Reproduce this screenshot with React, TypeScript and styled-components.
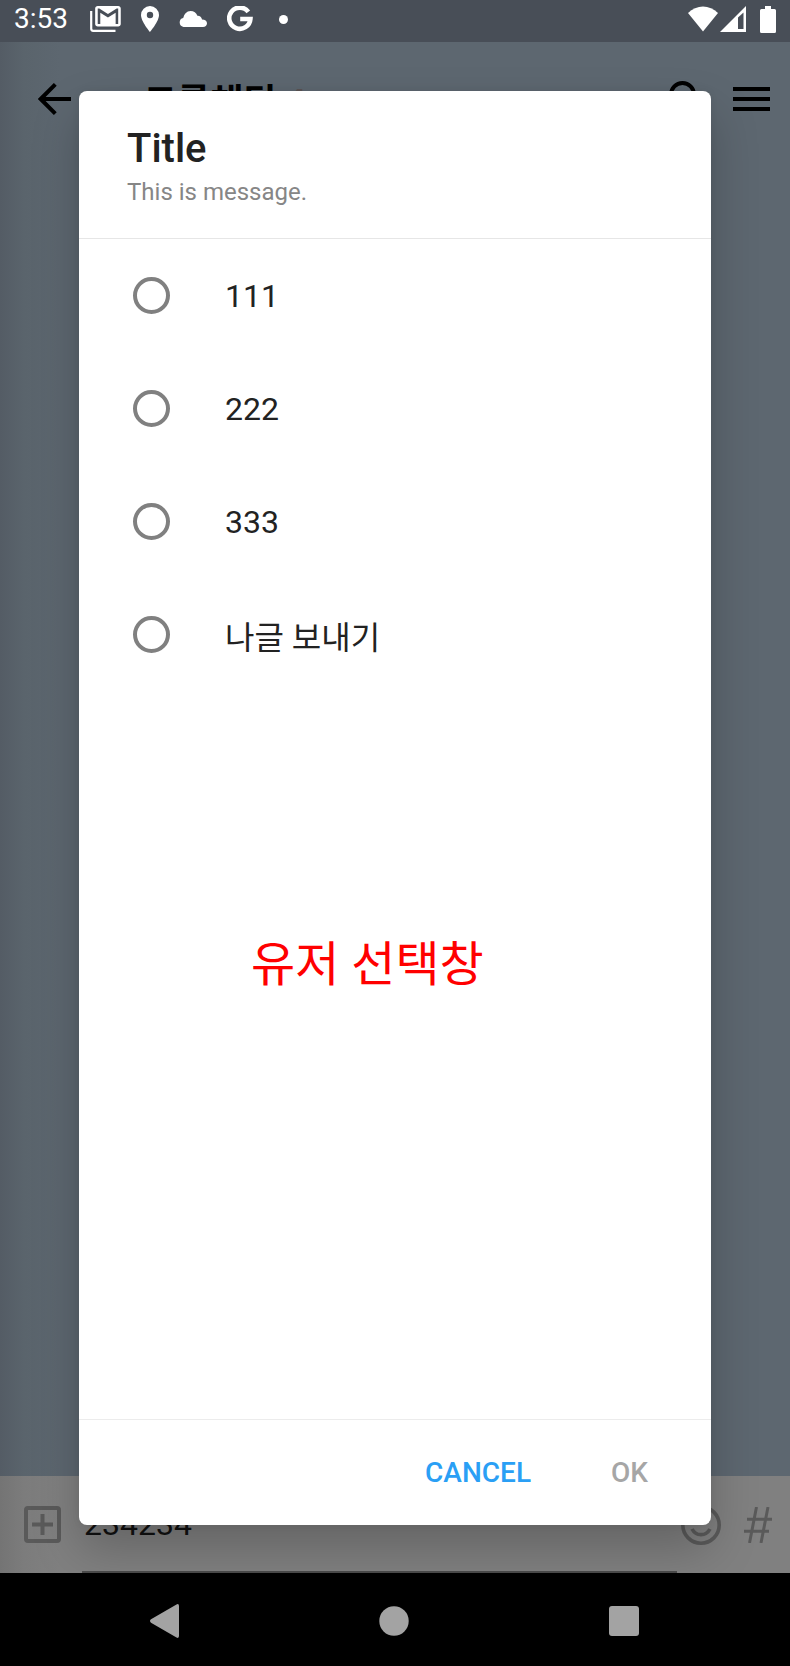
import React, { useState } from "react";
import styled, { createGlobalStyle } from "styled-components";

const GlobalStyle = createGlobalStyle`
  *, *::before, *::after { box-sizing: border-box; }
  body { margin: 0; background: #000; font-family: Roboto, "Noto Sans CJK KR", sans-serif; }
  button, input { font-family: inherit; }
  button { padding: 0; border: 0; background: none; cursor: pointer; }
  svg { display: block; flex: none; }
`;

const Screen = styled.div`
  position: relative;
  display: flex;
  flex-direction: column;
  min-height: 100vh;
`;

const StatusBar = styled.div`
  display: flex;
  align-items: center;
  justify-content: space-between;
  height: 42px;
  padding: 0 14px 4px 14px;
  background: #484e57;
  color: #fff;
`;

const StatusGroup = styled.div<{ $gap: number }>`
  display: flex;
  align-items: center;
  gap: ${(p) => p.$gap}px;
`;

const Clock = styled.time`
  margin-right: 2px;
  font-size: 28px;
  line-height: 36px;
`;

const Chat = styled.main`
  flex: 1;
  background: linear-gradient(90deg, #545c65 0, #5a646c 24px, #5d6770 60px);
`;

const ChatHeader = styled.header`
  display: flex;
  align-items: center;
  height: 114px;
  padding: 0 20px 0 38px;
`;

const IconButton = styled.button`
  display: flex;
  color: inherit;
`;

const ChatTitle = styled.h1`
  flex: 1;
  margin: 0 0 0 73px;
  padding-top: 8px;
  font-size: 36px;
  font-weight: 700;
  line-height: 42px;
  color: #000;
`;

const MemberCount = styled.span`
  color: #5b5354;
`;

const HeaderActions = styled.div`
  display: flex;
  align-items: center;
  gap: 24px;
`;

const Composer = styled.form`
  display: flex;
  align-items: stretch;
  height: 97px;
  padding: 0 18px 0 24px;
  background: linear-gradient(90deg, #747474 0, #7c7c7c 24px, #808080 60px);
  color: #5a5a5a;

  button { align-items: center; }
`;

const MessageInput = styled.input`
  flex: 1;
  min-width: 0;
  margin: 0 4px 0 21px;
  padding: 0 2px;
  border: 0;
  border-bottom: 2px solid #4c4c4c;
  outline: 0;
  background: transparent;
  color: #111;
  font-size: 32px;
`;

const ComposerActions = styled.div`
  display: flex;
  gap: 23px;
`;

const NavBar = styled.nav`
  display: flex;
  align-items: center;
  justify-content: space-around;
  height: 93px;
  padding: 3px 51px 0 50px;
  background: #000;
  color: #a3a3a3;
`;

const Overlay = styled.div`
  position: absolute;
  inset: 0;
  display: flex;
  padding: 91px 10% 141px;
`;

const Dialog = styled.section`
  flex: 1;
  display: flex;
  flex-direction: column;
  border-radius: 8px;
  background: #fff;
  box-shadow: 0 24px 48px rgba(0, 0, 0, 0.22), 0 0 8px rgba(0, 0, 0, 0.06);
`;

const DialogHeader = styled.header`
  height: 148px;
  padding: 34px 49px 0 48px;
  border-bottom: 1px solid #e6e6e6;
`;

const DialogTitle = styled.h2`
  margin: 0;
  font-size: 40px;
  font-weight: 500;
  line-height: 48px;
  color: #222;
`;

const DialogMessage = styled.p`
  margin: 4px 0 0;
  font-size: 24px;
  line-height: 30px;
  color: #868686;
`;

const Options = styled.fieldset`
  margin: 0;
  padding: 0;
  border: 0;
`;

const Option = styled.label`
  display: flex;
  align-items: center;
  gap: 55px;
  height: 113px;
  padding: 0 54px;
  font-size: 32px;
  line-height: normal;
  color: #222;
  cursor: pointer;
`;

const Radio = styled.input`
  appearance: none;
  width: 37px;
  height: 37px;
  margin: 0;
  border: 4px solid #808080;
  border-radius: 50%;

  &:checked {
    border-color: #2a9ff5;
    background: radial-gradient(#2a9ff5 9px, transparent 10px);
  }
`;

const Caption = styled.p`
  flex: 1;
  margin: 238px 0 0 172px;
  font-size: 48px;
  line-height: 72px;
  color: #f00;
`;

const DialogActions = styled.footer`
  display: flex;
  align-items: center;
  justify-content: flex-end;
  gap: 80px;
  height: 106px;
  padding: 0 63px;
  border-top: 1px solid #ececec;
`;

const ActionButton = styled.button`
  font-size: 28px;
  font-weight: 500;
  line-height: 36px;
  color: #2a9ff5;

  &:disabled { color: #a6a6a6; cursor: default; }
`;

const MailStackIcon = () => (
  <svg width="31" height="26" viewBox="0 0 31 26">
    <path d="M1.200 5v17.800a2 2 0 0 0 2 2H25.500" fill="none" stroke="#fff" strokeWidth="2.200" />
    <path
      transform="translate(2.600 -5.120) scale(1.280)"
      fill="#fff"
      fillRule="evenodd"
      d="M20 4H4c-1.100 0-2 .9-2 2v12c0 1.100.9 2 2 2h16c1.100 0 2-.9 2-2V6c0-1.100-.9-2-2-2Zm0 14h-2V9.250L12 13 6 9.250V18H4V6h1.200l6.800 4.250L18.800 6H20Z"
    />
  </svg>
);

const PinIcon = () => (
  <svg width="18" height="26" viewBox="0 0 18 26" fill="#fff">
    <path fillRule="evenodd" d="M9 0a9 9 0 0 0-9 9c0 6.500 9 17 9 17s9-10.500 9-17a9 9 0 0 0-9-9Zm0 5.800a3.200 3.200 0 1 1 0 6.400 3.200 3.200 0 0 1 0-6.400Z" />
  </svg>
);

const CloudIcon = () => (
  <svg width="28" height="16" viewBox="0 0 28 16" fill="#fff">
    <path d="M4.500 16a4.600 4.600 0 0 1-.3-9A7.800 7.800 0 0 1 11.500 0c3.400 0 5.800 2 6.900 4.800 2.300-.2 4.300 1.500 4.600 3.700C26 8.500 28 10 28 12.300 28 14.500 26.300 16 24 16Z" />
  </svg>
);

const GoogleIcon = () => (
  <svg width="26" height="26" viewBox="0 0 26 26" fill="none" stroke="#fff" strokeWidth="4.600">
    <path d="M21.300 5.800A10.600 10.600 0 1 0 23.400 13H13.200" />
  </svg>
);

const OverflowDot = styled.i`
  width: 9px;
  height: 9px;
  margin-left: 6px;
  border-radius: 50%;
  background: #fff;
`;

const WifiIcon = () => (
  <svg width="30" height="26" viewBox="0 0 30 26" fill="#fff">
    <path d="M0 7C8.500-1.800 21.500-1.800 30 7L15 25.500Z" />
  </svg>
);

const SignalIcon = () => (
  <svg width="26" height="26" viewBox="0 0 26 26" fill="#fff">
    <path fillRule="evenodd" d="M26 0v26H0ZM18 11.500V23H23.500V6.500Z" />
  </svg>
);

const BatteryIcon = () => (
  <svg width="16" height="27" viewBox="0 0 16 27" fill="#fff">
    <path d="M5 0h6v3h3.500A1.500 1.500 0 0 1 16 4.500v21a1.500 1.500 0 0 1-1.500 1.500h-13A1.500 1.500 0 0 1 0 25.500v-21A1.500 1.500 0 0 1 1.500 3H5Z" />
  </svg>
);

const BackIcon = () => (
  <svg width="33" height="32" viewBox="0 0 33 32" fill="none" stroke="#000" strokeWidth="4">
    <path d="M33 16H3M17.300 1.400 2.700 16l14.600 14.600" />
  </svg>
);

const SearchIcon = () => (
  <svg width="40" height="38" viewBox="0 0 40 38" fill="none" stroke="#000" strokeWidth="4">
    <circle cx="13.500" cy="14.500" r="11.500" />
    <path d="M22 23l12 12" />
  </svg>
);

const MenuIcon = () => (
  <svg width="37" height="24" viewBox="0 0 37 24" fill="#000">
    <path d="M0 0h37v4H0zM0 10h37v4H0zM0 20h37v4H0z" />
  </svg>
);

const AddIcon = () => (
  <svg width="37" height="37" viewBox="0 0 37 37" fill="none" stroke="currentColor" strokeWidth="4">
    <rect x="2" y="2" width="33" height="33" rx="2" />
    <path d="M18.500 8v21M8 18.500h21" />
  </svg>
);

const SmileIcon = () => (
  <svg width="40" height="40" viewBox="0 0 40 40" fill="none" stroke="currentColor">
    <circle cx="20" cy="20" r="18.200" strokeWidth="3.600" />
    <path d="M11 24c4 7.500 14 7.500 18 0" strokeWidth="3.600" />
    <path d="M13 12v5M27 12v5" strokeWidth="4" />
  </svg>
);

const HashIcon = () => (
  <svg width="28" height="36" viewBox="0 0 28 36" fill="none" stroke="currentColor" strokeWidth="3">
    <path d="M12.500 0 5.500 36M24 0l-7 36M3 12.200h25M0 24.200h25" />
  </svg>
);

const NavBackIcon = () => (
  <svg width="30" height="34" viewBox="0 0 30 34" fill="currentColor">
    <path d="M1 15.300 26.500.4q2.500-1 2.500 1.500v30.200q0 2.500-2.500 1.500L1 18.700q-2-1.700 0-3.400Z" />
  </svg>
);

const NavHomeIcon = () => (
  <svg width="30" height="30" viewBox="0 0 30 30" fill="currentColor"><circle cx="15" cy="15" r="14.700" /></svg>
);

const NavRecentIcon = () => (
  <svg width="30" height="30" viewBox="0 0 30 30" fill="currentColor"><rect width="30" height="30" rx="3" /></svg>
);

const options = ["111", "222", "333", "나글 보내기"];

export default function App() {
  const [selected, setSelected] = useState<string | null>(null);
  const [draft, setDraft] = useState("234234");

  return (
    <Screen>
      <GlobalStyle />
      <StatusBar>
        <StatusGroup $gap={20}>
          <Clock>3:53</Clock>
          <MailStackIcon />
          <PinIcon />
          <CloudIcon />
          <GoogleIcon />
          <OverflowDot />
        </StatusGroup>
        <StatusGroup $gap={14}>
          <StatusGroup $gap={2}>
            <WifiIcon />
            <SignalIcon />
          </StatusGroup>
          <BatteryIcon />
        </StatusGroup>
      </StatusBar>
      <Chat>
        <ChatHeader>
          <IconButton aria-label="Back"><BackIcon /></IconButton>
          <ChatTitle>그룹채팅 <MemberCount>4</MemberCount></ChatTitle>
          <HeaderActions>
            <IconButton aria-label="Search"><SearchIcon /></IconButton>
            <IconButton aria-label="Menu"><MenuIcon /></IconButton>
          </HeaderActions>
        </ChatHeader>
      </Chat>
      <Composer onSubmit={(e) => e.preventDefault()}>
        <IconButton type="button" aria-label="Add"><AddIcon /></IconButton>
        <MessageInput aria-label="Message" value={draft} onChange={(e) => setDraft(e.target.value)} />
        <ComposerActions>
          <IconButton type="button" aria-label="Emoji"><SmileIcon /></IconButton>
          <IconButton type="button" aria-label="Hashtag search"><HashIcon /></IconButton>
        </ComposerActions>
      </Composer>
      <NavBar>
        <IconButton aria-label="System back"><NavBackIcon /></IconButton>
        <IconButton aria-label="Home"><NavHomeIcon /></IconButton>
        <IconButton aria-label="Recent apps"><NavRecentIcon /></IconButton>
      </NavBar>
      <Overlay>
        <Dialog role="dialog" aria-modal="true" aria-labelledby="dialog-title">
          <DialogHeader>
            <DialogTitle id="dialog-title">Title</DialogTitle>
            <DialogMessage>This is message.</DialogMessage>
          </DialogHeader>
          <Options aria-labelledby="dialog-title">
            {options.map((option) => (
              <Option key={option}>
                <Radio
                  type="radio"
                  name="choice"
                  checked={selected === option}
                  onChange={() => setSelected(option)}
                />
                {option}
              </Option>
            ))}
          </Options>
          <Caption>유저 선택창</Caption>
          <DialogActions>
            <ActionButton type="button" onClick={() => setSelected(null)}>CANCEL</ActionButton>
            <ActionButton type="button" disabled={selected === null}>OK</ActionButton>
          </DialogActions>
        </Dialog>
      </Overlay>
    </Screen>
  );
}
